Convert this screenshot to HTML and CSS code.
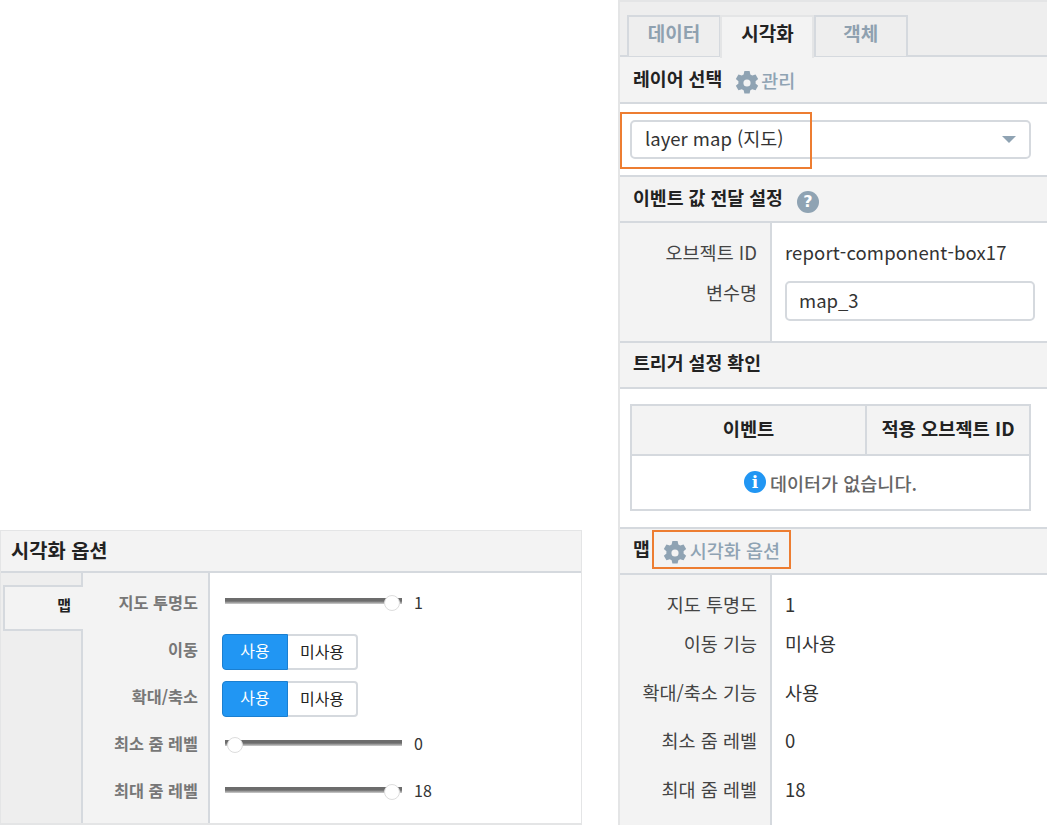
FILE: index.html
```html
<!DOCTYPE html>
<html lang="ko">
<head>
<meta charset="utf-8">
<title>시각화 옵션</title>
<link rel="stylesheet" href="styles.css">
</head>
<body>
<svg class="defs" width="0" height="0" aria-hidden="true">
  <symbol id="gear" viewBox="0 0 24 24"><path fill-rule="evenodd" d="M9.6 1h4.8l.7 3.2c.6.2 1.2.5 1.700.9l3.100-1 2.400 4.100-2.400 2.200c.1.7.1 1.300 0 2l2.400 2.200-2.400 4.100-3.100-1c-.5.4-1.100.7-1.700.9l-.7 3.200H9.600l-.7-3.200c-.6-.2-1.200-.5-1.700-.9l-3.100 1-2.400-4.100 2.400-2.200c-.1-.7-.1-1.300 0-2L1.700 8.200l2.400-4.100 3.100 1c.5-.4 1.100-.7 1.700-.9zM12 8.700a3.300 3.300 0 1 0 0 6.600 3.300 3.300 0 0 0 0-6.600z"/></symbol>
</svg>

<main class="page">
  <section class="left-panel">
    <h2 class="left-title">시각화 옵션</h2>
    <div class="left-body">
      <div class="side">
        <div class="side-tab">맵</div>
      </div>
      <div class="opt-grid">
        <div class="opt-label opt-first">지도 투명도</div>
        <div class="opt-value opt-first">
          <div class="slider"><span class="thumb thumb-end"></span></div><span class="slider-num">1</span>
        </div>
        <div class="opt-label">이동</div>
        <div class="opt-value">
          <div class="toggle"><span class="toggle-on">사용</span><span class="toggle-off">미사용</span></div>
        </div>
        <div class="opt-label">확대/축소</div>
        <div class="opt-value">
          <div class="toggle"><span class="toggle-on">사용</span><span class="toggle-off">미사용</span></div>
        </div>
        <div class="opt-label">최소 줌 레벨</div>
        <div class="opt-value">
          <div class="slider"><span class="thumb thumb-start"></span></div><span class="slider-num">0</span>
        </div>
        <div class="opt-label">최대 줌 레벨</div>
        <div class="opt-value opt-last">
          <div class="slider"><span class="thumb thumb-end"></span></div><span class="slider-num">18</span>
        </div>
        <div class="opt-fill-l"></div><div class="opt-fill-r"></div>
      </div>
    </div>
  </section>

  <section class="right-panel">
    <div class="tabs">
      <div class="tab">데이터</div>
      <div class="tab tab-active">시각화</div>
      <div class="tab">객체</div>
    </div>
    <div class="head head-layer">
      <h3 class="head-text">레이어 선택</h3>
      <svg class="gear"><use href="#gear"/></svg><span class="link">관리</span>
    </div>
    <div class="select-wrap">
      <div class="select">layer map (지도)<span class="caret"></span></div>
      <div class="mark mark-select"></div>
    </div>
    <div class="head head-event">
      <h3 class="head-text">이벤트 값 전달 설정</h3>
      <span class="help">?</span>
    </div>
    <div class="form form-event">
      <div class="form-l">오브젝트 ID</div><div class="form-r form-r-id">report-component-box17</div>
      <div class="form-l form-l-var">변수명</div><div class="form-r form-r-input"><div class="input">map_3</div></div>
    </div>
    <div class="head head-trigger">
      <h3 class="head-text">트리거 설정 확인</h3>
    </div>
    <div class="table-wrap">
      <div class="table">
        <div class="th th-a">이벤트</div>
        <div class="th th-b">적용 오브젝트 ID</div>
        <div class="td"><span class="info">i</span>데이터가 없습니다.</div>
      </div>
    </div>
    <div class="head head-map">
      <h3 class="head-text">맵</h3>
      <div class="mark-inline">
        <svg class="gear"><use href="#gear"/></svg><span class="link">시각화 옵션</span>
      </div>
    </div>
    <div class="form form-map">
      <div class="form-l">지도 투명도</div><div class="form-r">1</div>
      <div class="form-l">이동 기능</div><div class="form-r">미사용</div>
      <div class="form-l">확대/축소 기능</div><div class="form-r">사용</div>
      <div class="form-l">최소 줌 레벨</div><div class="form-r">0</div>
      <div class="form-l">최대 줌 레벨</div><div class="form-r">18</div>
    </div>
  </section>
</main>
</body>
</html>
```
FILE: styles.css
```css
* { box-sizing: border-box; margin: 0; padding: 0; }
html, body { background: #fff; }
body {
  width: 1047px;
  height: 825px;
  overflow: hidden;
  font-family: "Noto Sans CJK KR", "Noto Sans", sans-serif;
  color: #333;
}
.defs { position: absolute; }
.page {
  display: flex;
  align-items: flex-end;
  justify-content: space-between;
  height: 825px;
}

/* left panel */
.left-panel {
  width: 582px;
  height: 295px;
  border: 1px solid #e4e5e6;
  border-bottom-width: 2px;
  display: flex;
  flex-direction: column;
  background: #fff;
}
.left-title {
  height: 42px;
  padding-left: 10px;
  background: #f3f3f3;
  border-bottom: 2px solid #d5d9de;
  font-size: 19.8px;
  line-height: 37px;
  font-weight: 700;
  color: #222;
}
.left-body { flex: 1; display: flex; min-height: 0; }
.side {
  width: 82px;
  background: #eee;
  border-right: 2px solid #d5d9de;
  padding-top: 12px;
}
.side-tab {
  height: 46px;
  margin-left: 2px;
  margin-right: -2px;
  background: #f3f3f3;
  border: 2px solid #d5d9de;
  border-right: 0;
  padding-right: 12px;
  text-align: right;
  font-size: 15px;
  font-weight: 700;
  line-height: 36px;
  color: #222;
}
.opt-grid {
  flex: 1;
  display: grid;
  grid-template-columns: 127px 1fr;
  grid-template-rows: 52px 47px 47px 47px 47px 1fr;
}
.opt-label {
  background: #f3f3f3;
  border-right: 2px solid #d5d9de;
  padding-right: 10px;
  text-align: right;
  font-size: 16.3px;
  font-weight: 700;
  color: #777;
  line-height: 20px;
  display: flex;
  align-items: center;
  justify-content: flex-end;
}
.opt-value {
  display: flex;
  align-items: center;
  padding-left: 12px;
}
.opt-label.opt-first, .opt-value.opt-first { padding-top: 5px; }
.opt-first .slider { margin-top: -2px; }
.opt-last .slider { margin-top: 0; }
.opt-fill-l { background: #f3f3f3; border-right: 2px solid #d5d9de; }
.slider {
  position: relative;
  width: 177px;
  height: 6px;
  margin-left: 3px;
  background: linear-gradient(#6c6c6c, #6c6c6c 50%, #cfcfcf);
}
.thumb {
  position: absolute;
  top: -3px;
  width: 16px;
  height: 16px;
  border-radius: 50%;
  background: #fff;
  border: 1px solid #ddd;
}
.thumb-end { right: 2px; }
.thumb-start { left: 2px; }
.slider-num { margin-left: 12px; font-size: 16px; color: #333; }
.toggle {
  display: flex;
  width: 136px;
  height: 36px;
  margin-top: 6px;
  font-size: 16px;
  line-height: 30px;
  text-align: center;
}
.toggle-on {
  width: 66px;
  color: #fff;
  background: #2196f3;
  border: 1px solid #1b7fd0;
  border-radius: 4px 0 0 4px;
}
.toggle-off {
  width: 70px;
  color: #222;
  background: #fff;
  border: 2px solid #d5d9de;
  border-left: 0;
  border-radius: 0 4px 4px 0;
}

/* right panel */
.right-panel {
  position: relative;
  width: 429px;
  height: 825px;
  border-left: 2px solid #e4e5e6;
  display: flex;
  flex-direction: column;
  background: #fff;
}
.tabs {
  height: 57px;
  flex: none;
  background: #eee;
  border-bottom: 2px solid #d5d9de;
  padding: 14px 0 0 7px;
  display: flex;
  border-top: 2px solid #e4e5e6;
}
.tab {
  width: 94px;
  height: 41px;
  margin-top: -1px;
  background: #eee;
  border: 2px solid #d5d9de;
  border-bottom: 0;
  margin-right: -0.6px;
  text-align: center;
  font-size: 19px;
  font-weight: 700;
  line-height: 32px;
  color: #8fa1b0;
}
.tab-active {
  height: 43px;
  background: #f3f3f3;
  color: #222;
  border-color: #e4e5e6;
  position: relative;
}
.head {
  flex: none;
  display: flex;
  align-items: center;
  padding-left: 13px;
  background: #f3f3f3;
  border-bottom: 2px solid #d5d9de;
}
.head-text { font-size: 18.3px; font-weight: 700; color: #222; line-height: 20px; }
.head-layer { height: 47px; }
.head-layer .head-text { margin-top: -3px; }
.head-event { height: 46px; }
.head-event .head-text { margin-top: -5px; }
.head-trigger { height: 46px; }
.head-trigger .head-text { margin-top: -6px; }
.head-map { height: 46px; }
.head-map .head-text { margin-top: -6px; }
.gear { width: 26px; height: 26px; fill: #8fa3b3; flex: none; }
.head-layer .gear { margin-left: 12px; margin-top: 6px; }
.link { font-size: 18.5px; color: #8fa3b3; font-weight: 500; margin-left: 1px; line-height: 20px; }
.head-layer .link { margin-top: 1px; }
.select-wrap {
  position: relative;
  flex: none;
  height: 73px;
  padding: 16px 16px 0 10px;
  border-bottom: 2px solid #d5d9de;
}
.select {
  position: relative;
  height: 39px;
  border: 2px solid #d5d9de;
  border-radius: 5px;
  padding-left: 13px;
  font-size: 18.5px;
  line-height: 33px;
  color: #333;
}
.caret {
  position: absolute;
  right: 13px;
  top: 14px;
  border-left: 7px solid transparent;
  border-right: 7px solid transparent;
  border-top: 7px solid #8fa3b3;
}
.mark { position: absolute; border: 2px solid #ed7d31; }
.mark-select { left: 0; top: 8px; width: 192px; height: 57px; }
.help {
  width: 22px;
  height: 22px;
  margin-left: 14px;
  margin-top: 6px;
  border-radius: 50%;
  background: #8fa3b3;
  color: #fff;
  font-family: "DejaVu Sans", sans-serif;
  font-weight: 700;
  font-size: 16px;
  line-height: 22px;
  text-align: center;
}
.form {
  flex: none;
  display: grid;
  grid-template-columns: 152px 1fr;
  font-size: 18.5px;
  color: #444;
  border-bottom: 2px solid #d5d9de;
}
.form-l {
  background: #f3f3f3;
  border-right: 2px solid #d5d9de;
  padding-right: 13px;
  text-align: right;
  line-height: 22px;
}
.form-r { padding-left: 13px; line-height: 22px; color: #333; }
.form-event { height: 120px; grid-template-rows: 58px 60px; }
.form-event .form-l, .form-event .form-r { padding-top: 18px; }
.form-event .form-r-id { letter-spacing: 0.13px; }
.form-event .form-l-var { padding-top: 0; margin-top: 0; line-height: 22px; }
.form-event .form-r-input { padding: 0 12px 0 13px; }
.input {
  height: 40px;
  border: 2px solid #d5d9de;
  border-radius: 5px;
  padding-left: 12px;
  line-height: 34px;
  color: #333;
}
.table-wrap {
  flex: none;
  height: 140px;
  padding: 15px 16px 0 10px;
  border-bottom: 2px solid #d5d9de;
}
.table {
  display: grid;
  grid-template-columns: 235px 1fr;
  grid-template-rows: 50px 53px;
  height: 107px;
  border: 2px solid #d5d9de;
}
.th {
  background: #f3f3f3;
  border-bottom: 2px solid #d5d9de;
  text-align: center;
  font-size: 18.7px;
  font-weight: 700;
  line-height: 44px;
  color: #222;
}
.th-a { border-right: 2px solid #d5d9de; }
.td {
  grid-column: 1 / 3;
  display: flex;
  align-items: center;
  justify-content: center;
  font-size: 18.5px;
  font-weight: 500;
  color: #666;
}
.info {
  width: 22px;
  height: 22px;
  margin-right: 4px;
  margin-top: -1px;
  border-radius: 50%;
  background: #2196f3;
  color: #fff;
  font-family: "DejaVu Serif", serif;
  font-weight: 700;
  font-size: 17px;
  line-height: 22px;
  text-align: center;
}
.mark-inline {
  display: flex;
  align-items: center;
  height: 39px;
  width: 139px;
  margin-left: 2px;
  margin-top: -4px;
  padding-left: 8px;
  border: 2px solid #ed7d31;
}
.mark-inline .gear { margin-top: 8px; }
.mark-inline .link { margin-top: 1px; margin-left: 2px; }
.form-map {
  flex: 1;
  border-bottom: 0;
  grid-template-rows: 57px 49px 48px 49px 1fr;
}
.form-map .form-l:nth-child(-n+2), .form-map .form-r:nth-child(-n+2) { padding-top: 18px; }
```
